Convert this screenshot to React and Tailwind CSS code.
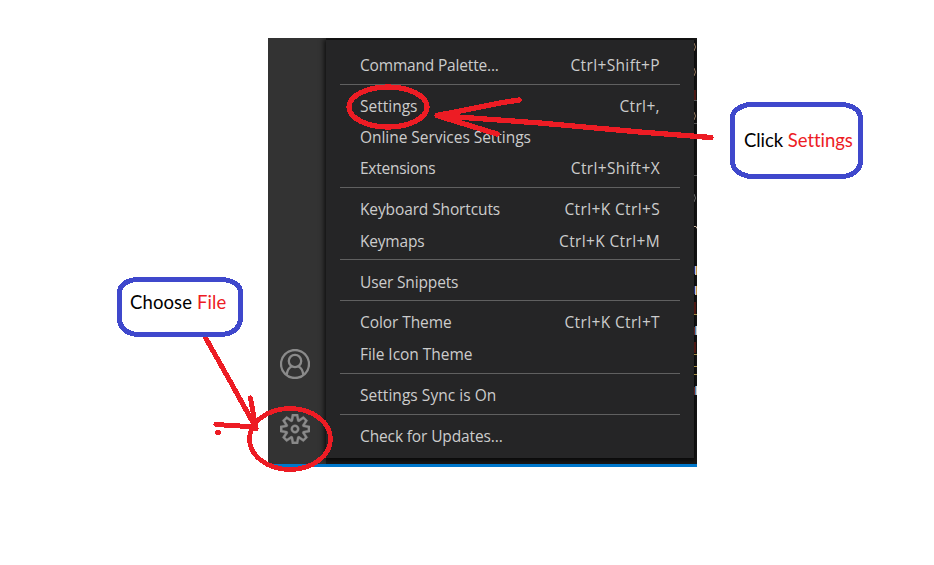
const groups = [
  [['Command Palette...', 'Ctrl+Shift+P', 'tracking-[-0.180px]']],
  [
    ['Settings', 'Ctrl+,', ''],
    ['Online Services Settings', '', 'tracking-[-0.040px]'],
    ['Extensions', 'Ctrl+Shift+X', 'tracking-[-0.260px]'],
  ],
  [
    ['Keyboard Shortcuts', 'Ctrl+K Ctrl+S', 'tracking-[-0.120px]'],
    ['Keymaps', 'Ctrl+K Ctrl+M', 'tracking-[-0.200px]'],
  ],
  [['User Snippets', '', 'tracking-[-0.150px]']],
  [
    ['Color Theme', 'Ctrl+K Ctrl+T', 'tracking-[-0.080px]'],
    ['File Icon Theme', '', 'tracking-[-0.040px]'],
  ],
  [['Settings Sync is On', '', 'tracking-[0.040px]']],
  [['Check for Updates...', '', 'tracking-[-0.130px]']],
];

function AccountIcon() {
  return (
    <svg className="h-[30px] w-[30px]" viewBox="0 0 30 30" fill="none" stroke="#8a8a8a" strokeWidth="2.3">
      <circle cx="15" cy="15" r="14" />
      <circle cx="15" cy="12" r="6.2" />
      <path d="M6.6 26 C7.2 21.5 9 18.5 11.8 17.2 M23.4 26 C22.8 21.5 21 18.5 18.2 17.2" />
    </svg>
  );
}

function GearIcon() {
  return (
    <svg className="h-[30px] w-[30px]" viewBox="0 0 24 24" fill="#8a8a8a" stroke="#8a8a8a" strokeWidth="0.3" fillRule="evenodd">
      <path d="M19.85 8.75l4.15.83v4.84l-4.15.83 2.35 3.52-3.43 3.43-3.52-2.35-.83 4.15H9.58l-.83-4.15-3.52 2.35-3.43-3.43 2.35-3.52L0 14.42V9.58l4.15-.83L1.8 5.23 5.23 1.8l3.52 2.35L9.58 0h4.84l.83 4.15 3.52-2.35 3.43 3.43-2.35 3.52zm-1.57 5.07l4-.81v-2l-4-.81-.54-1.3 2.29-3.43-1.43-1.43-3.43 2.29-1.3-.54-.81-4h-2l-.81 4-1.3.54-3.43-2.29-1.43 1.43L6.38 8.9l-.54 1.3-4 .81v2l4 .81.54 1.3-2.29 3.43 1.43 1.43 3.43-2.29 1.3.54.81 4h2l.81-4 1.3-.54 3.43 2.29 1.43-1.43-2.29-3.43.54-1.3zm-8.186-4.672A3.43 3.43 0 0 1 12 8.57 3.44 3.44 0 0 1 15.43 12a3.43 3.43 0 1 1-5.336-2.852zm.956 4.274c.281.188.612.288.95.288A1.7 1.7 0 0 0 13.71 12a1.71 1.71 0 1 0-2.66 1.422z" />
    </svg>
  );
}

// Slivers of editor text that peek out beside the menu
function EditorEdge() {
  return (
    <svg className="h-[426px] w-[3px] shrink-0" viewBox="0 38 3 426" fill="none">
      <path d="M0 43 Q3 47 0 51 M0 68 Q3 72 0 76 M0 112 Q3 116 0 120" stroke="#92785f" />
      <path d="M0 194 Q3 198 0 202" stroke="#666" />
      <path d="M0 90v10M0 302v12M0 342v11" stroke="#4b1712" strokeWidth="4" />
      <path d="M0 100.500h3M0 123.500h3M0 175.500h3" stroke="#555" />
      <path d="M0 226.500h2l1 2" stroke="#c9b4a0" />
      <path d="M.5 266v8M.5 286v8" stroke="#252b7a" />
      <path d="M1.500 266v9M1.500 286v9" stroke="#b8c8d8" />
      <path d="M2.500 266v9M2.500 286v9" stroke="#c69043" />
      <path d="M0 314.500h3M0 354.500h3M0 366.500h3M0 374.500h3" stroke="#a58e45" />
      <path d="M.5 327v8M.5 387v8" stroke="#6d2420" />
      <path d="M1.500 326v9M1.500 386v9" stroke="#4b86b5" />
      <path d="M2.500 326v9M2.500 386v9" stroke="#ccc" />
    </svg>
  );
}

function Menu() {
  return (
    <div className="mt-[2px] h-[418px] w-[368px] shrink-0 bg-[#252526] pt-[9.650px] shadow-[0_1px_5px_2px_#000000b0]">
      {groups.map((rows, i) => (
        <div key={i}>
          {i > 0 && <div className="mx-[14px] mt-[2.600px] mb-[6.100px] h-px bg-[#606060]" />}
          {rows.map(([label, keys, spacing]) => (
            <div key={label} className="flex h-[31.300px] items-center justify-between pr-[34px] pl-[34px] text-[15.500px] whitespace-nowrap text-[#cccccc]">
              <span className={spacing}>{label}</span>
              <span className="tracking-[0.360px]">{keys}</span>
            </div>
          ))}
        </div>
      ))}
    </div>
  );
}

export default function App() {
  return (
    <div className="relative flex h-[565px] w-[934px] overflow-hidden bg-white font-['Open_Sans',sans-serif]">
      <div className="w-[268px] shrink-0 pt-[277px] pl-[117px]">
        <div className="flex h-[60px] w-[126px] pt-[12px] pl-[13px] font-['Lato',sans-serif] text-[18.500px] leading-[26px] tracking-[0.100px] whitespace-pre text-black">
          <span>Choose </span><span className="text-[#ed1c24]">File</span>
        </div>
      </div>

      <div className="mt-[38px] flex h-[429px] w-[429px] shrink-0 flex-col overflow-hidden bg-[#1b1b1b]">
        <div className="flex h-[426px] overflow-hidden">
          <div className="flex w-[58px] shrink-0 flex-col items-center justify-end gap-[35px] bg-[#333333] pr-[4px] pb-[20px]">
            <AccountIcon />
            <GearIcon />
          </div>
          <Menu />
          <EditorEdge />
        </div>
        <div className="h-[3px] bg-[#0078cc]" />
      </div>

      <div className="pt-[102px] pl-[33px]">
        <div className="flex h-[76px] w-[133px] items-center pt-px pl-[14px] font-['Lato',sans-serif] text-[18.500px] tracking-[-0.050px] whitespace-pre text-black [font-variant-ligatures:none]">
          <span>Click </span><span className="text-[#ed1c24]">Settings</span>
        </div>
      </div>

      <svg className="pointer-events-none absolute inset-0 h-[565px] w-[934px]" viewBox="0 0 934 565" fill="none" shapeRendering="crispEdges" strokeLinecap="round" strokeLinejoin="round">
        <g stroke="#ed1c24" strokeWidth="5.300">
          <ellipse cx="388" cy="107" rx="39" ry="20" />
          <path d="M711 137.500 L640 132 L540 123 L437 115.500 M519 100 L500 103 L437 115.500 L497 134" />
          <ellipse cx="290" cy="439" rx="40.500" ry="30.500" strokeWidth="4.800" />
          <path d="M204 335 L230 381 L256 428 M250.500 398 L256 429 M216 424.500 L256 427" strokeWidth="5" />
          <path d="M218 432.500h.1" strokeWidth="6" />
        </g>
        <g stroke="#3f48cc" strokeWidth="5">
          <path d="M137 279.500H223Q240.500 282 240.500 292V320Q238 333 222 334.500H136Q121 332 119.500 320V293Q120 281 137 279.500Z" />
          <path d="M749 104.500H843Q860 107 860.500 118V162Q859 174 844 176.500H749Q734 173 732.500 163V116Q735 107 749 104.500Z" />
        </g>
      </svg>
    </div>
  );
}
